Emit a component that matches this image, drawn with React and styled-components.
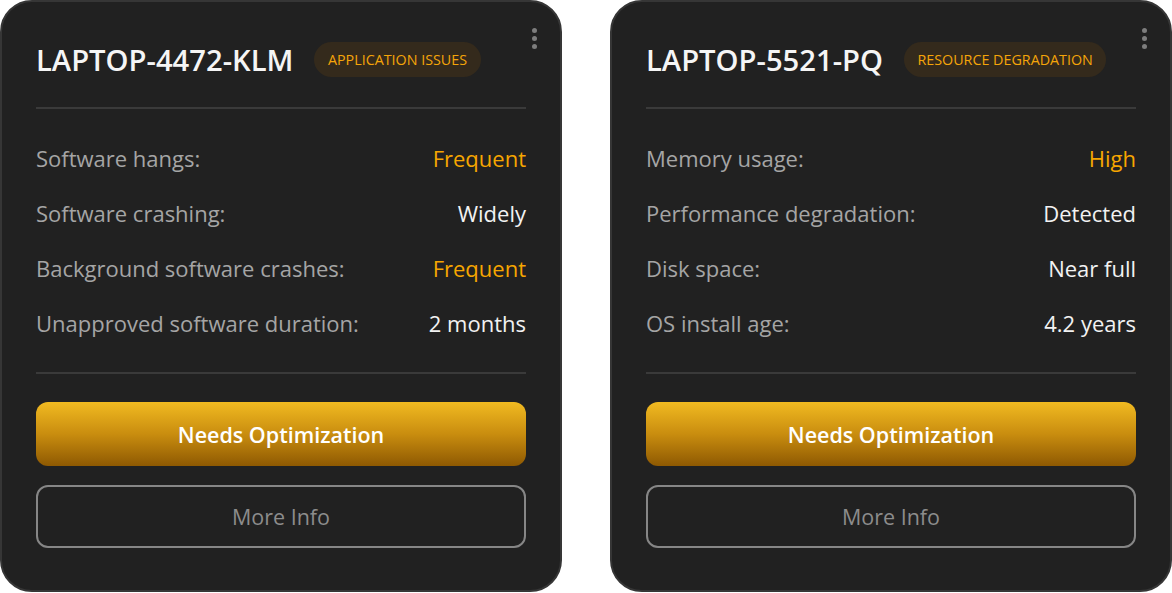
import React from "react";
import styled, { createGlobalStyle } from "styled-components";

const devices = [
  {
    name: "LAPTOP-4472-KLM",
    tag: "APPLICATION ISSUES",
    stats: [
      { label: "Software hangs:", value: "Frequent", warn: true },
      { label: "Software crashing:", value: "Widely" },
      { label: "Background software crashes:", value: "Frequent", warn: true },
      { label: "Unapproved software duration:", value: "2 months" },
    ],
  },
  {
    name: "LAPTOP-5521-PQ",
    tag: "RESOURCE DEGRADATION",
    stats: [
      { label: "Memory usage:", value: "High", warn: true },
      { label: "Performance degradation:", value: "Detected" },
      { label: "Disk space:", value: "Near full" },
      { label: "OS install age:", value: "4.2 years" },
    ],
  },
];

const App = () => {
  return (
    <>
      <GlobalStyle />
      <Board>
        {devices.map((d) => (
          <Card key={d.name}>
            <MenuDots aria-label="More actions">
              <span />
              <span />
              <span />
            </MenuDots>
            <Header>
              <Title>{d.name}</Title>
              <Tag>{d.tag}</Tag>
            </Header>
            <Divider />
            <Stats>
              {d.stats.map((s) => (
                <StatRow key={s.label}>
                  <Label>{s.label}</Label>
                  <Value $warn={s.warn}>{s.value}</Value>
                </StatRow>
              ))}
            </Stats>
            <Divider />
            <Actions>
              <PrimaryButton>Needs Optimization</PrimaryButton>
              <GhostButton>More Info</GhostButton>
            </Actions>
          </Card>
        ))}
      </Board>
    </>
  );
};

const GlobalStyle = createGlobalStyle`
  * { box-sizing: border-box; }
  body {
    margin: 0;
    background: #ffffff;
    font-family: "Open Sans", "Liberation Sans", sans-serif;
  }
`;

const Board = styled.div`
  display: flex;
  gap: 48px;
  width: 1172px;
`;

const Card = styled.div`
  position: relative;
  width: 562px;
  height: 592px;
  background: #212121;
  border: 2px solid #363636;
  border-radius: 32px;
  padding: 40px 34px 40px;
  display: flex;
  flex-direction: column;
`;

const MenuDots = styled.button`
  position: absolute;
  top: 26px;
  right: 23px;
  display: flex;
  flex-direction: column;
  gap: 3px;
  padding: 0;
  background: none;
  border: none;
  span {
    width: 5px;
    height: 5px;
    border-radius: 50%;
    background: #7d7d7d;
  }
`;

const Header = styled.div`
  display: flex;
  align-items: center;
  gap: 21px;
  height: 35px;
  margin-bottom: 30px;
`;

const Title = styled.h2`
  margin: 0;
  font-size: 29.2px;
  font-weight: 600;
  color: #f5f5f5;
`;

const Tag = styled.span`
  display: inline-flex;
  align-items: center;
  height: 35px;
  padding: 0 13.5px;
  border-radius: 18px;
  background: #342a1c;
  color: #f5a509;
  font-size: 14.3px;
  font-weight: 500;
`;

const Divider = styled.hr`
  flex: none;
  margin: 0;
  border: none;
  height: 2px;
  background: #3a3a3a;
`;

const Stats = styled.div`
  display: flex;
  flex-direction: column;
  padding: 21px 0 22px;
`;

const StatRow = styled.div`
  display: flex;
  align-items: center;
  justify-content: space-between;
  height: 55px;
  font-size: 22px;
`;

const Label = styled.span`
  color: #a5a5a5;
`;

const Value = styled.span`
  color: ${(p) => (p.$warn ? "#f7a600" : "#f2f2f2")};
`;

const Actions = styled.div`
  display: flex;
  flex-direction: column;
  gap: 19px;
  margin-top: 28px;
`;

const PrimaryButton = styled.button`
  height: 64px;
  border: none;
  border-radius: 12px;
  background: linear-gradient(180deg, #f1ba21 0%, #c98d0f 50%, #8e5902 100%);
  color: #ffffff;
  font-family: inherit;
  font-size: 21.5px;
  font-weight: 600;
`;

const GhostButton = styled.button`
  height: 63px;
  border: 2px solid #868686;
  border-radius: 12px;
  background: transparent;
  color: #8c8c8c;
  font-family: inherit;
  font-size: 21.5px;
  font-weight: 400;
`;

export default App;
